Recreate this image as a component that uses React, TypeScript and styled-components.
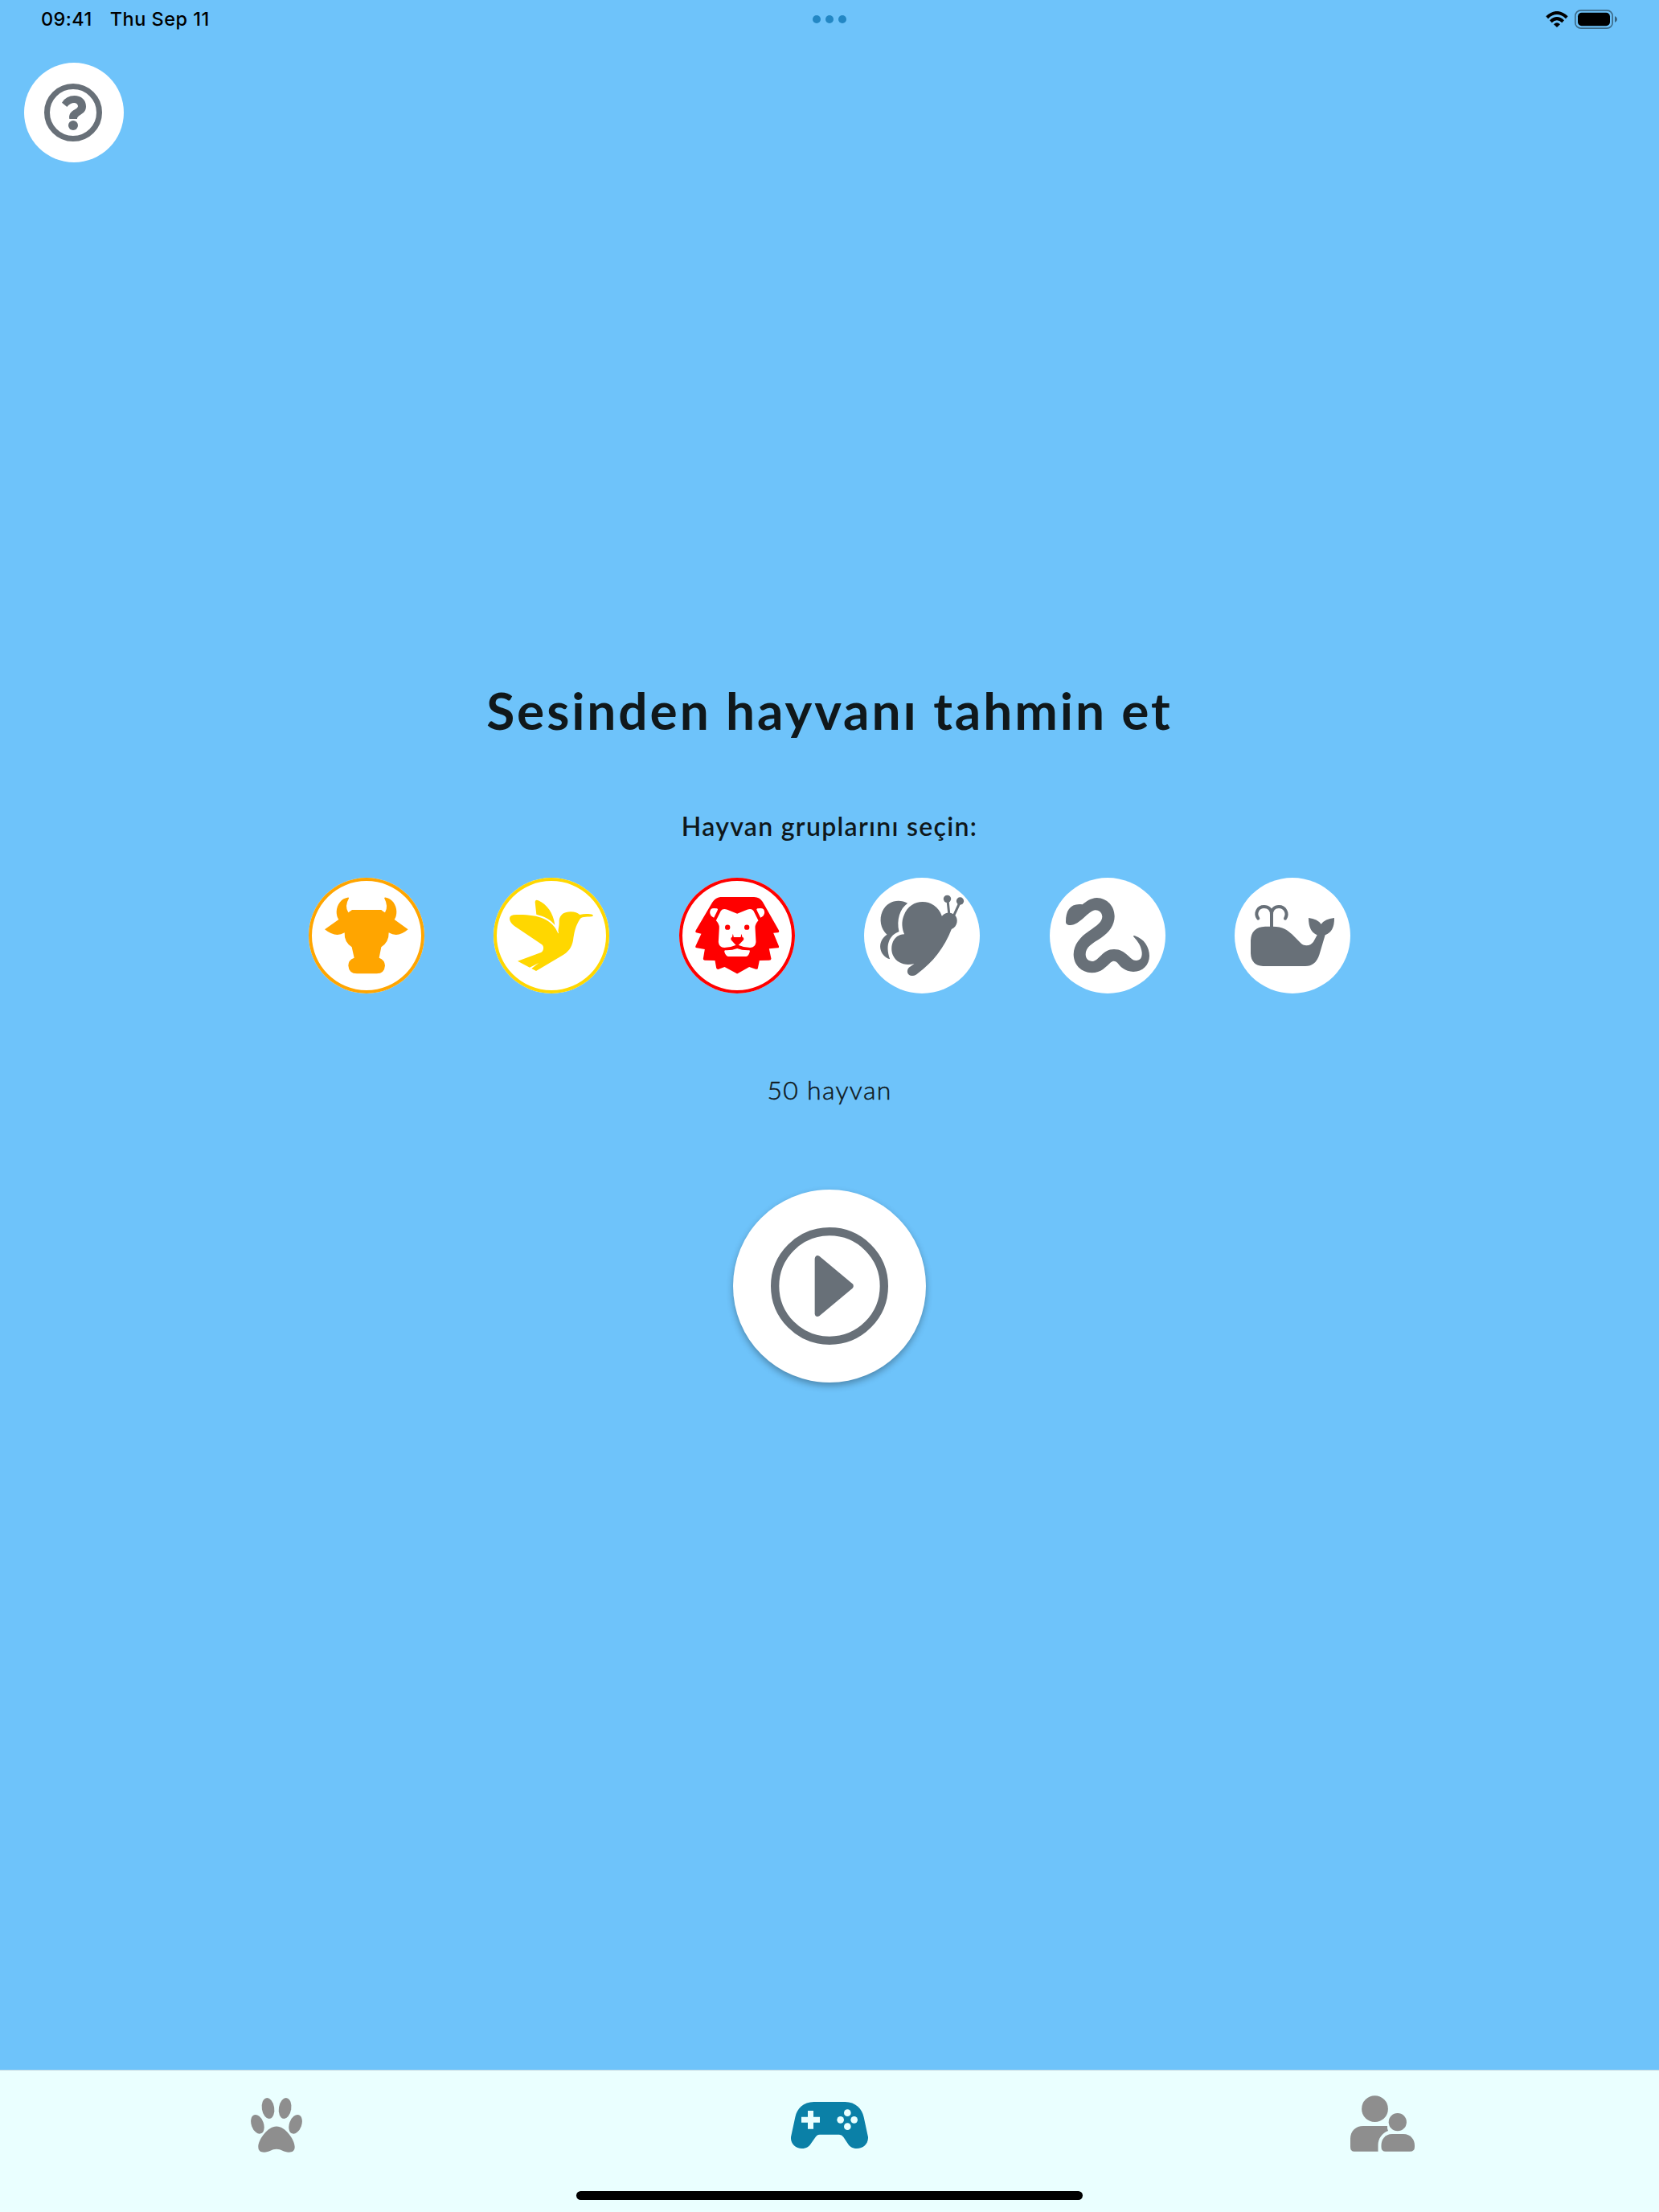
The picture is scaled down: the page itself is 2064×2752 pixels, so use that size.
import React, { useState } from "react";
import styled, { createGlobalStyle } from "styled-components";

const GRAY = "#687078";

const GlobalStyle = createGlobalStyle`
  body { margin: 0; background: #6ec3fa; }
  * { box-sizing: border-box; }
  button { border: 0; padding: 0; background: none; font: inherit; }
`;

const Screen = styled.div`
  display: flex;
  flex-direction: column;
  width: 2064px;
  height: 2752px;
  background: #6ec3fa;
  color: #10181b;
  font-family: Lato, "Open Sans", sans-serif;
`;

const StatusBar = styled.header`
  display: grid;
  grid-template-columns: 1fr auto 1fr;
  align-items: center;
  height: 48px;
  padding: 0 52px 0 51px;
  color: #000;
  font: 500 23.5px/48px Inter, sans-serif;
`;

const Clock = styled.div`
  display: flex;
  gap: 22px;
`;

const StatusText = styled.span<{ $spacing: number }>`
  letter-spacing: ${(p) => p.$spacing}px;
`;

const Dots = styled.div`
  display: flex;
  gap: 6px;
`;

const Dot = styled.i`
  width: 10px;
  height: 10px;
  border-radius: 50%;
  background: #2387c4;
`;

const Indicators = styled.div`
  display: flex;
  justify-content: flex-end;
  align-items: center;
  gap: 8px;
`;

const Toolbar = styled.div`
  padding: 30px 30px 0;
  height: 154px;
`;

const RoundButton = styled.button<{ $size: number; $ring?: string; $raised?: boolean }>`
  display: block;
  width: ${(p) => p.$size}px;
  height: ${(p) => p.$size}px;
  border-radius: 50%;
  background: #fff;
  color: ${(p) => p.$ring ?? GRAY};
  box-shadow: ${(p) =>
    p.$raised
      ? "0 4px 8px rgba(0, 0, 0, 0.3)"
      : p.$ring
        ? `inset 0 0 0 4px ${p.$ring}`
        : "none"};
`;

const Glyph = styled.svg`
  display: block;
  width: 100%;
  height: 100%;
  fill: currentColor;
`;

const Main = styled.main`
  display: flex;
  flex: 1;
  flex-direction: column;
  align-items: center;
  padding-top: 642px;
`;

const Title = styled.h1`
  margin: 0;
  font-size: 64px;
  line-height: 80px;
  font-weight: 700;
  letter-spacing: 2.9px;
  white-space: nowrap;
`;

const Subtitle = styled.h2`
  margin: 84px 0 0;
  font-size: 32px;
  line-height: 40px;
  font-weight: 600;
  letter-spacing: 1.3px;
`;

const Groups = styled.div`
  display: flex;
  justify-content: space-between;
  width: 1296px;
  margin-top: 44px;
`;

const Count = styled.p`
  margin: 100px 0 104px;
  font-size: 32px;
  line-height: 40px;
  font-weight: 300;
  letter-spacing: 1.3px;
  -webkit-text-stroke: 0.5px currentColor;
`;

const TabBar = styled.nav`
  display: flex;
  flex-direction: column;
  align-items: center;
  height: 177px;
  border-top: 1px solid #c3d9e2;
  background: #eaffff;
`;

const Tabs = styled.div`
  display: grid;
  grid-template-columns: repeat(3, 1fr);
  width: 100%;
  height: 136px;
`;

const Tab = styled.button<{ $active?: boolean }>`
  display: flex;
  align-items: center;
  justify-content: center;
  color: ${(p) => (p.$active ? "#0b80a7" : "#8e8e8e")};
`;

const HomeIndicator = styled.div`
  width: 630px;
  height: 11px;
  margin-top: 14px;
  border-radius: 6px;
  background: #000;
`;

const Wifi = () => (
  <svg width="28" height="20" viewBox="130 42 82 60">
    <g fill="none" stroke="#000" strokeWidth="12">
      <path d="M134 65Q171 31 208 65" />
      <path d="M148 80Q171 59 194 80" />
    </g>
    <path d="M159 91Q171 79 183 91L171 102Z" />
  </svg>
);

const Battery = () => (
  <svg width="53" height="24" viewBox="237 36 159 72">
    <rect x="239.5" y="38.5" width="139" height="67" rx="21" fill="none" stroke="#000" strokeOpacity=".45" strokeWidth="5" />
    <rect x="249" y="47.500" width="120" height="49" rx="14" />
    <path d="M387 60Q396 64 396 72Q396 80 387 84Z" opacity=".5" />
  </svg>
);

const Bull = () => (
  <Glyph viewBox="42 36 432 432">
    <path d="M204 156H313Q319 162 327 166Q341 144 324 111Q326 109 331 110C352 113 370 136 370 163Q370 181 362 192L413 229Q376 261 341 241Q342 276 313 295L305 335Q326 343 327 364Q325 394 296 394H222Q192 394 190 364Q190 343 212 335L203 295Q174 276 176 241Q142 261 102 229L154 192Q146 181 146 163C147 135 165 113 187 110Q193 109 192 113Q175 142 190 166Z" />
  </Glyph>
);

const Bird = () => (
  <Glyph viewBox="42 36 432 432">
    <path d="M102 189Q101 174 128 174C202 172 262 188 283 244L285 243C281 228 288 222 287 196C290 173 306 163 330 163C345 163 357 168 364 174C380 170 400 170 412 174Q416 179 408 181C385 182 370 183 365 190C348 216 343 240 339 270C334 298 320 314 296 328L201 384L184 375L211 354L177 371L132 347L219 315C230 309 232 291 221 284L124 219C109 208 103 200 102 189Z" />
    <path d="M197 127Q197 116 209 121C240 134 266 168 271 213C255 191 230 180 202 173Z" />
  </Glyph>
);

const Lion = () => (
  <Glyph viewBox="44.500 36 432 432">
    <path d="M168 128Q180 110 198 108H324Q345 108 356 126L416 232Q420 240 412 241L396 242L416 290Q419 297 412 298L380 301L388 338Q388 344 380 344L344 345L338 374Q336 379 330 377L306 369L265 392Q261 395 257 392L214 369L190 378Q184 378 183 373L178 345L140 344Q133 343 134 338L140 303L110 298Q103 296 106 290L127 245L108 241Q103 239 107 232Z" />
    <g fill="#fff">
      <path d="M261 170L224 155Q207 149 200 160L182 196Q194 208 194 222L191 276Q193 296 213 297Q235 297 257 287H265Q287 297 309 297Q329 296 331 276L328 222Q328 208 340 196L322 160Q315 149 298 155Z" />
      <path d="M159 166Q159 150 174 150L186 151Q191 153 187 159L174 185Q160 180 159 166Z" />
      <path d="M363 166Q363 150 348 150L336 151Q331 153 335 159L348 185Q362 180 363 166Z" />
      <path d="M216 307Q242 308 261 300Q280 308 306 307Q309 308 308 312Q303 330 293 330H229Q219 330 213 312Q213 307 216 307Z" />
    </g>
    <circle cx="225" cy="221" r="9.500" />
    <circle cx="297" cy="221" r="9.500" />
    <path d="M245 245L248 258H274L277 245L280 258Q287 259 285 268L265 289H257L238 268Q236 259 242 258Z" />
  </Glyph>
);

const Butterfly = () => (
  <Glyph viewBox="44.500 36 432 432">
    <path d="M207 131C178 152 165 192 175 237C140 250 122 285 141 340C101 327 90 275 130 248C106 226 100 190 113 161C131 122 175 113 207 131Z" />
    <path d="M335 179C312 111 218 107 193 177C183 200 186 227 195 247C151 248 140 295 152 325C166 357 200 365 232 357L212 371C201 383 206 402 224 402C235 402 240 397 246 392C300 353 345 296 371 228C395 218 397 189 383 175Q358 156 335 179Z" />
    <circle cx="355" cy="115" r="14" />
    <circle cx="403" cy="123" r="14" />
    <path d="M362 172L356 116M380 176L403 126" fill="none" stroke="currentColor" strokeWidth="9" />
  </Glyph>
);

const Snake = () => (
  <Glyph viewBox="48 36 432 432">
    <path d="M108 200C108 157 126 130 170 136C185 124 200 112 224 111C262 112 290 142 290 180C290 213 270 240 240 260C205 282 182 295 182 322C182 339 193 348 208 348C234 345 244 303 288 303C334 303 346 345 370 345C386 345 393 335 392 315C390 293 378 274 360 255Q360 251 366 253C400 264 420 295 420 328C420 362 395 387 360 387C328 386 312 368 301 354C292 345 284 345 276 352C257 369 240 391 205 391C165 390 137 360 137 322C138 286 160 258 195 235C226 214 244 200 244 181C243 165 231 157 219 157C190 160 161 213 125 213C112 212 108 208 108 200Z" />
  </Glyph>
);

const Whale = () => (
  <Glyph viewBox="48 36 432 432">
    <path d="M108 270Q110 220 162 218H190C228 218 248 233 262 247L294 279Q303 289 316 289Q334 289 343 274L356 250Q324 238 324 186Q357 190 371 209Q385 190 420 186Q421 238 386 250L364 324Q350 366 312 366H154Q110 364 108 318Z" />
    <path d="M186 222V174C186 154 174 144 158 144C135 144 122 168 136 188M186 174C186 154 198 144 213 144C236 144 249 168 237 188" fill="none" stroke="currentColor" strokeWidth="12" strokeLinecap="round" />
  </Glyph>
);

const Help = () => (
  <Glyph viewBox="90 234 372 372">
    <circle cx="273" cy="420" r="97.500" fill="none" stroke="currentColor" strokeWidth="21" />
    <path d="M231 383Q247 357 278 357C303 357 321 373 321 397C321 429 289 426 288 444H259C254 409 291 411 291 395C289 380 265 379 250 399Z" />
    <circle cx="273" cy="468" r="18" />
  </Glyph>
);

const Play = () => (
  <Glyph viewBox="66 480 720 720">
    <circle cx="426" cy="840" r="203.500" fill="none" stroke="currentColor" strokeWidth="31" />
    <path d="M371 738Q374 722 388 728L512 832Q519 840 512 848L388 952Q374 958 371 944Z" />
  </Glyph>
);

const Paw = () => (
  <svg width="68" height="74" viewBox="0 0 68 74" fill="currentColor">
    <ellipse cx="23.500" cy="16" rx="7.700" ry="13" transform="rotate(-9 23.500 16)" />
    <ellipse cx="44.600" cy="16" rx="7.700" ry="13" transform="rotate(9 44.600 16)" />
    <ellipse cx="10.400" cy="35.800" rx="7.600" ry="12.300" transform="rotate(-20 10.400 35.800)" />
    <ellipse cx="57.600" cy="35.800" rx="7.600" ry="12.300" transform="rotate(20 57.600 35.800)" />
    <path d="M34 38.500C45 38.500 56.700 55 56.700 64C56.700 69 53.500 70.700 49.500 70.700C43 70.700 40 66.800 34 66.800C28 66.800 25 70.700 18.500 70.700C14.500 70.700 11.300 69 11.300 64C11.300 55 23 38.500 34 38.500Z" />
  </svg>
);

const Gamepad = () => (
  <svg width="96" height="58" viewBox="72 165 288 174" fill="currentColor">
    <path d="M158 165H274C314 165 338 192 344 222L360 296C361 322 342 339 318 339C301 339 290 330 284 320L268 296Q262 287 252 287H180Q170 287 164 296L147 320C141 331 130 339 113 339C88 339 70 320 72 296L88 222C95 190 118 165 158 165Z" />
    <g fill="#eaffff">
      <path d="M135 198H156V221H180V242H156V266H135V242H111V221H135Z" />
      <circle cx="283" cy="206" r="13" />
      <circle cx="257" cy="232" r="13" />
      <circle cx="308" cy="232" r="13" />
      <circle cx="283" cy="257" r="13" />
    </g>
  </svg>
);

const Family = () => (
  <svg width="80" height="74" viewBox="1680 2607 80 74" fill="currentColor">
    <circle cx="1710.500" cy="2623.700" r="16.400" />
    <circle cx="1738.800" cy="2640.200" r="11.100" />
    <path d="M1696 2645H1726Q1725.500 2648 1727 2651C1719 2654 1714.500 2661 1714.500 2669V2676.800H1685Q1680 2676.800 1680 2671V2661C1680 2651 1687 2645 1696 2645Z" />
    <path d="M1732 2655H1746C1755 2655 1760 2662 1760 2669V2671Q1760 2676.800 1754 2676.800H1724Q1718.500 2676.800 1718.500 2671V2669C1718.500 2662 1723 2655 1732 2655Z" />
  </svg>
);

const groups = [
  { id: "farm", Icon: Bull, color: "#ffa500" },
  { id: "birds", Icon: Bird, color: "#ffd700" },
  { id: "wild", Icon: Lion, color: "#ff0000" },
  { id: "insects", Icon: Butterfly, color: "#8a2be2" },
  { id: "reptiles", Icon: Snake, color: "#008000" },
  { id: "sea", Icon: Whale, color: "#0000ff" },
];

export default function App() {
  const [selected, setSelected] = useState(["farm", "birds", "wild"]);
  const toggle = (id: string) =>
    setSelected((s) => (s.includes(id) ? s.filter((x) => x !== id) : [...s, id]));

  return (
    <Screen>
      <GlobalStyle />
      <StatusBar>
        <Clock>
          <StatusText $spacing={0.4}>09:41</StatusText>
          <StatusText $spacing={0.5}>Thu Sep 11</StatusText>
        </Clock>
        <Dots>
          <Dot />
          <Dot />
          <Dot />
        </Dots>
        <Indicators>
          <Wifi />
          <Battery />
        </Indicators>
      </StatusBar>
      <Toolbar>
        <RoundButton $size={124}>
          <Help />
        </RoundButton>
      </Toolbar>
      <Main>
        <Title>Sesinden hayvanı tahmin et</Title>
        <Subtitle>Hayvan gruplarını seçin:</Subtitle>
        <Groups>
          {groups.map(({ id, Icon, color }) => (
            <RoundButton
              key={id}
              $size={144}
              $ring={selected.includes(id) ? color : undefined}
              onClick={() => toggle(id)}
            >
              <Icon />
            </RoundButton>
          ))}
        </Groups>
        <Count>50 hayvan</Count>
        <RoundButton $size={240} $raised>
          <Play />
        </RoundButton>
      </Main>
      <TabBar>
        <Tabs>
          <Tab>
            <Paw />
          </Tab>
          <Tab $active>
            <Gamepad />
          </Tab>
          <Tab>
            <Family />
          </Tab>
        </Tabs>
        <HomeIndicator />
      </TabBar>
    </Screen>
  );
}
